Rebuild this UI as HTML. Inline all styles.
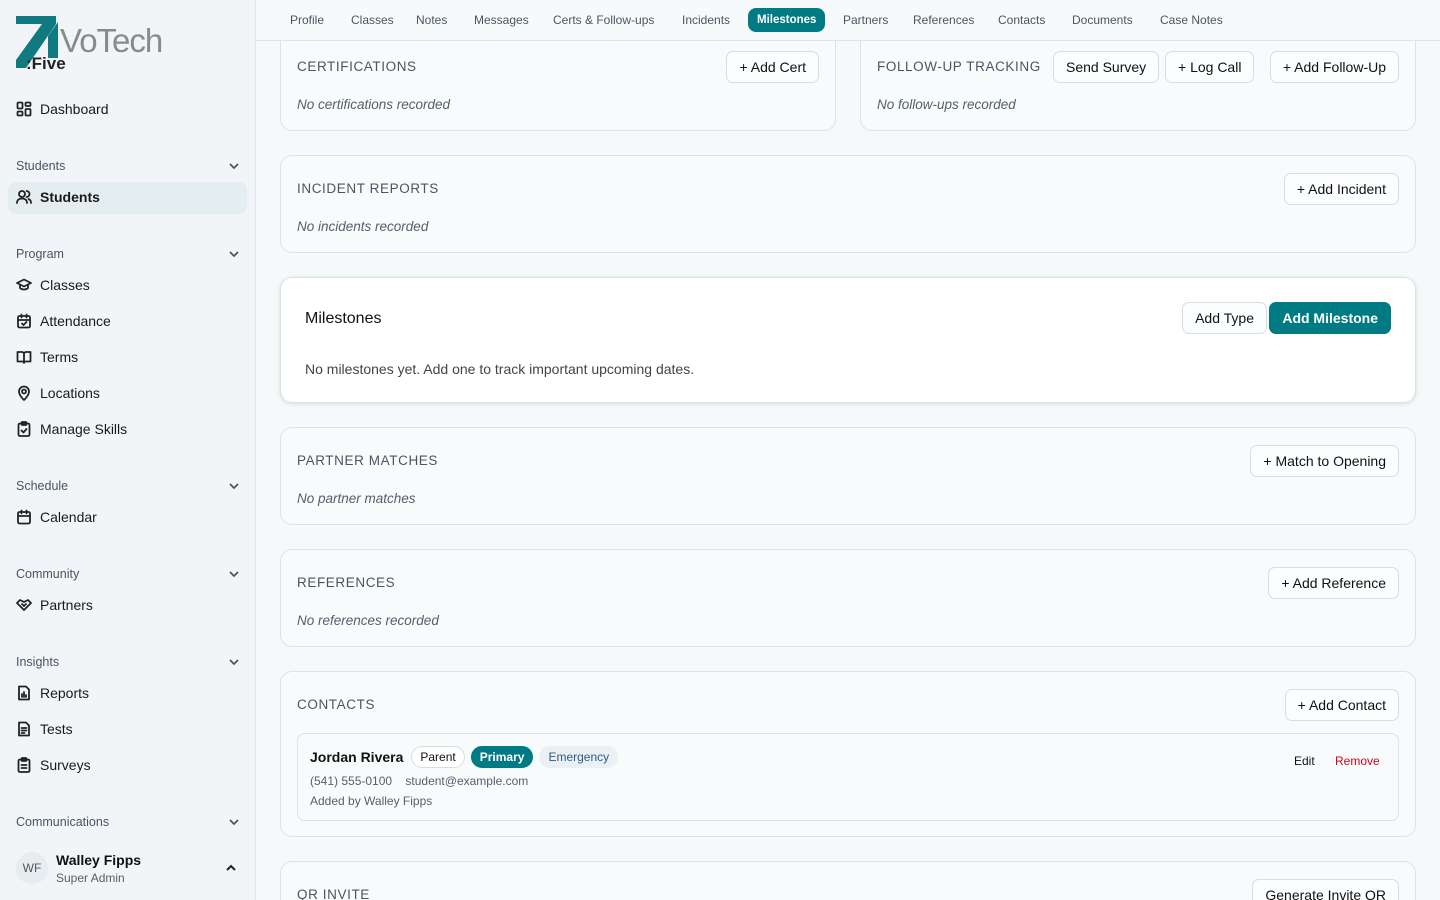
<!DOCTYPE html>
<html><head><meta charset="utf-8">
<style>
*{box-sizing:border-box;margin:0;padding:0}
html,body{width:1440px;height:900px;overflow:hidden}
body{font-family:"Liberation Sans",sans-serif;background:#f6f9fa;color:#111;position:relative}
#w{position:absolute;left:0;top:0;width:1440px;height:900px;overflow:hidden}
.sb{position:absolute;left:0;top:0;width:256px;height:900px;background:#f1f5f8;border-right:1px solid #dfe6ea;z-index:2}
.logo{position:absolute;left:16px;top:16px}
.it{position:absolute;left:16px;font-size:14px;color:#1a1a1a;display:flex;align-items:center;gap:8px}
.it svg{width:16px;height:16px;fill:none;stroke:#222;stroke-width:1.8;stroke-linecap:round;stroke-linejoin:round}
.sec{position:absolute;left:16px;width:224px;font-size:12.5px;color:#4a5560;display:flex;justify-content:space-between;align-items:center}
.sec svg{width:12px;height:12px;fill:none;stroke:#555;stroke-width:1.8}
.act{position:absolute;left:8px;top:182px;width:239px;height:32px;background:#e4edf0;border-radius:8px}
.tabs{position:absolute;left:256px;top:0;right:0;height:41px;border-bottom:1px solid #dbe4e7;background:#f7fafb;font-size:12px;color:#4a5560;z-index:2}
.tabs span{position:absolute;top:13px}
.tabs .on{top:8px;height:24px;padding:0 9px;line-height:24px;background:#007a83;color:#fff;border-radius:8px;font-weight:bold;font-size:11.5px}
.card{position:absolute;border:1px solid #dbe3e7;border-radius:12px;background:#f8fbfc}
.h{position:absolute;left:16px;font-size:13.5px;letter-spacing:.6px;color:#4b5560}
.e{position:absolute;left:16px;font-size:13.5px;font-style:italic;color:#555f69}
.b{position:absolute;height:32px;padding:0 12px;border:1px solid #d6dee2;border-radius:7px;background:#fbfdfe;font-size:14px;line-height:30px;color:#111;white-space:nowrap}
.pill{display:inline-block;padding:0 8px;height:22px;line-height:20px;border-radius:11px;font-size:12px;margin-left:6px}
</style></head><body><div id="w">
<div class="sb">
<div class="logo"><svg width="155" height="56" viewBox="0 0 155 56"><polygon points="0,0 40,0 40,8 10,52 0,52 0,44 26,8 0,8" fill="#0f7a80"/><polygon points="32,20 42,6 42,42 32,42" fill="#0f7a80"/><text x="44" y="36" font-family="Liberation Sans" font-size="33" fill="#8a8a8a" letter-spacing="-1">VoTech</text><text x="10" y="53" font-family="Liberation Sans" font-weight="bold" font-size="17" fill="#222">:Five</text></svg></div>
<div class="it" style="top:101px"><svg viewBox="0 0 16 16"><rect x="1.5" y="1.5" width="5" height="6" rx="1"/><rect x="9.5" y="1.5" width="5" height="3.5" rx="1"/><rect x="9.5" y="8" width="5" height="6.5" rx="1"/><rect x="1.5" y="10.5" width="5" height="4" rx="1"/></svg>Dashboard</div>
<div class="sec" style="top:159px">Students<svg viewBox="0 0 12 12"><path d="M2 4l4 4 4-4"/></svg></div>
<div class="act"></div>
<div class="it" style="top:189px;font-weight:bold"><svg viewBox="0 0 16 16"><circle cx="6" cy="5" r="3"/><path d="M1 14c0-3 2-4.5 5-4.5s5 1.5 5 4.5M10.5 2a3 3 0 010 6M12.5 10c1.5.5 2.5 2 2.5 4"/></svg>Students</div>
<div class="sec" style="top:247px">Program<svg viewBox="0 0 12 12"><path d="M2 4l4 4 4-4"/></svg></div>
<div class="it" style="top:277px"><svg viewBox="0 0 16 16"><path d="M1 6l7-3.5L15 6 8 9.5z"/><path d="M4 7.5v3.5c2 2 6 2 8 0V7.5"/></svg>Classes</div>
<div class="it" style="top:313px"><svg viewBox="0 0 16 16"><rect x="2" y="3" width="12" height="11.5" rx="1.5"/><path d="M2 7h12M5.5 1.5v3M10.5 1.5v3M6 10.5l1.5 1.5 3-3"/></svg>Attendance</div>
<div class="it" style="top:349px"><svg viewBox="0 0 16 16"><path d="M1.5 3h4.5a2 2 0 012 2v9a1.5 1.5 0 00-1.5-1.5H1.5zM14.5 3H10a2 2 0 00-2 2v9a1.5 1.5 0 011.5-1.5h5z"/></svg>Terms</div>
<div class="it" style="top:385px"><svg viewBox="0 0 16 16"><path d="M8 15s5-4.5 5-8.5a5 5 0 00-10 0C3 10.5 8 15 8 15z"/><circle cx="8" cy="6.5" r="2"/></svg>Locations</div>
<div class="it" style="top:421px"><svg viewBox="0 0 16 16"><rect x="2.5" y="2.5" width="11" height="12.5" rx="1.5"/><rect x="5.5" y="1" width="5" height="3" rx="1"/><path d="M5.5 9.5l2 2 3-3.5"/></svg>Manage Skills</div>
<div class="sec" style="top:479px">Schedule<svg viewBox="0 0 12 12"><path d="M2 4l4 4 4-4"/></svg></div>
<div class="it" style="top:509px"><svg viewBox="0 0 16 16"><rect x="2" y="3" width="12" height="11.5" rx="1.5"/><path d="M2 7h12M5.5 1.5v3M10.5 1.5v3"/></svg>Calendar</div>
<div class="sec" style="top:567px">Community<svg viewBox="0 0 12 12"><path d="M2 4l4 4 4-4"/></svg></div>
<div class="it" style="top:597px"><svg viewBox="0 0 16 16"><path d="M1 6l3-3 4 2 4-2 3 3-7 7z"/><path d="M6 7l2 2 2-2"/></svg>Partners</div>
<div class="sec" style="top:655px">Insights<svg viewBox="0 0 12 12"><path d="M2 4l4 4 4-4"/></svg></div>
<div class="it" style="top:685px"><svg viewBox="0 0 16 16"><path d="M3 1.5h7l3 3v10H3z"/><path d="M6 12V9M8 12V7M10 12v-2"/></svg>Reports</div>
<div class="it" style="top:721px"><svg viewBox="0 0 16 16"><path d="M3 1.5h7l3 3v10H3z"/><path d="M5.5 7h5M5.5 9.5h5M5.5 12h3"/></svg>Tests</div>
<div class="it" style="top:757px"><svg viewBox="0 0 16 16"><rect x="2.5" y="2.5" width="11" height="12.5" rx="1.5"/><rect x="5.5" y="1" width="5" height="3" rx="1"/><path d="M5.5 8h5M5.5 11h5"/></svg>Surveys</div>
<div class="sec" style="top:815px">Communications<svg viewBox="0 0 12 12"><path d="M2 4l4 4 4-4"/></svg></div>
<div style="position:absolute;left:16px;top:852px;width:32px;height:32px;border-radius:16px;background:#e6ecef;font-size:12px;color:#555;text-align:center;line-height:32px">WF</div>
<div style="position:absolute;left:56px;top:852px;font-size:14px;font-weight:bold">Walley Fipps</div>
<div style="position:absolute;left:56px;top:871px;font-size:12px;color:#555f69">Super Admin</div>
<svg style="position:absolute;left:225px;top:862px" width="12" height="12" viewBox="0 0 12 12" fill="none" stroke="#222" stroke-width="2"><path d="M2 8l4-4 4 4"/></svg>
</div>

<div class="card" style="left:280px;top:20px;width:556px;height:111px"><div class="h" style="top:38px">CERTIFICATIONS</div><div class="b" style="right:16px;top:30px">+ Add Cert</div><div class="e" style="top:76px">No certifications recorded</div></div>
<div class="card" style="left:860px;top:20px;width:556px;height:111px"><div class="h" style="top:38px">FOLLOW-UP TRACKING</div><div class="b" style="left:192px;top:30px">Send Survey</div><div class="b" style="left:304px;top:30px">+ Log Call</div><div class="b" style="right:16px;top:30px">+ Add Follow-Up</div><div class="e" style="top:76px">No follow-ups recorded</div></div>

<div class="tabs">
<span style="left:34px">Profile</span><span style="left:95px">Classes</span><span style="left:160px">Notes</span><span style="left:218px">Messages</span><span style="left:297px">Certs &amp; Follow-ups</span><span style="left:426px">Incidents</span><span class="on" style="left:492px">Milestones</span><span style="left:587px">Partners</span><span style="left:657px">References</span><span style="left:742px">Contacts</span><span style="left:816px">Documents</span><span style="left:904px">Case Notes</span>
</div>

<div class="card" style="left:280px;top:155px;width:1136px;height:98px"><div class="h" style="top:25px">INCIDENT REPORTS</div><div class="b" style="right:16px;top:17px">+ Add Incident</div><div class="e" style="top:63px">No incidents recorded</div></div>

<div class="card" style="left:280px;top:277px;width:1136px;height:126px;background:#fff;box-shadow:0 1px 4px rgba(0,0,0,.12)"><div style="position:absolute;left:24px;top:32px;font-size:16px">Milestones</div><div class="b" style="right:148px;top:24px">Add Type</div><div class="b" style="right:24px;top:24px;background:#007a83;color:#fff;border-color:#007a83;font-weight:bold">Add Milestone</div><div style="position:absolute;left:24px;top:83px;font-size:14px;color:#444">No milestones yet. Add one to track important upcoming dates.</div></div>

<div class="card" style="left:280px;top:427px;width:1136px;height:98px"><div class="h" style="top:25px">PARTNER MATCHES</div><div class="b" style="right:16px;top:17px">+ Match to Opening</div><div class="e" style="top:63px">No partner matches</div></div>
<div class="card" style="left:280px;top:549px;width:1136px;height:98px"><div class="h" style="top:25px">REFERENCES</div><div class="b" style="right:16px;top:17px">+ Add Reference</div><div class="e" style="top:63px">No references recorded</div></div>
<div class="card" style="left:280px;top:671px;width:1136px;height:166px"><div class="h" style="top:25px">CONTACTS</div><div class="b" style="right:16px;top:17px">+ Add Contact</div>
<div style="position:absolute;left:16px;top:61px;width:1102px;height:88px;border:1px solid #dbe3e7;border-radius:8px;background:#f8fbfc">
<div style="position:absolute;left:12px;top:12px;font-size:14px;font-weight:bold;display:flex;align-items:center">Jordan Rivera<span class="pill" style="border:1px solid #d6dee2;background:#fff;font-weight:normal;margin-left:8px">Parent</span><span class="pill" style="background:#007a83;color:#fff;border:1px solid #007a83">Primary</span><span class="pill" style="background:#eaf0f3;color:#2f5b80;font-weight:normal;border:1px solid #eaf0f3">Emergency</span></div>
<div style="position:absolute;left:12px;top:40px;font-size:12px;color:#555f69">(541) 555-0100&nbsp;&nbsp;&nbsp; student@example.com</div>
<div style="position:absolute;left:12px;top:60px;font-size:12px;color:#555f69">Added by Walley Fipps</div>
<div style="position:absolute;left:996px;top:20px;font-size:12px">Edit</div>
<div style="position:absolute;left:1037px;top:20px;font-size:12px;color:#d0021b">Remove</div>
</div></div>
<div class="card" style="left:280px;top:861px;width:1136px;height:39px;border-bottom:none;border-radius:12px 12px 0 0;overflow:hidden"><div class="h" style="top:25px">QR INVITE</div><div class="b" style="right:16px;top:17px;height:22px;border-bottom:none;border-radius:7px 7px 0 0;overflow:hidden">Generate Invite QR</div></div>
</div></body></html>
